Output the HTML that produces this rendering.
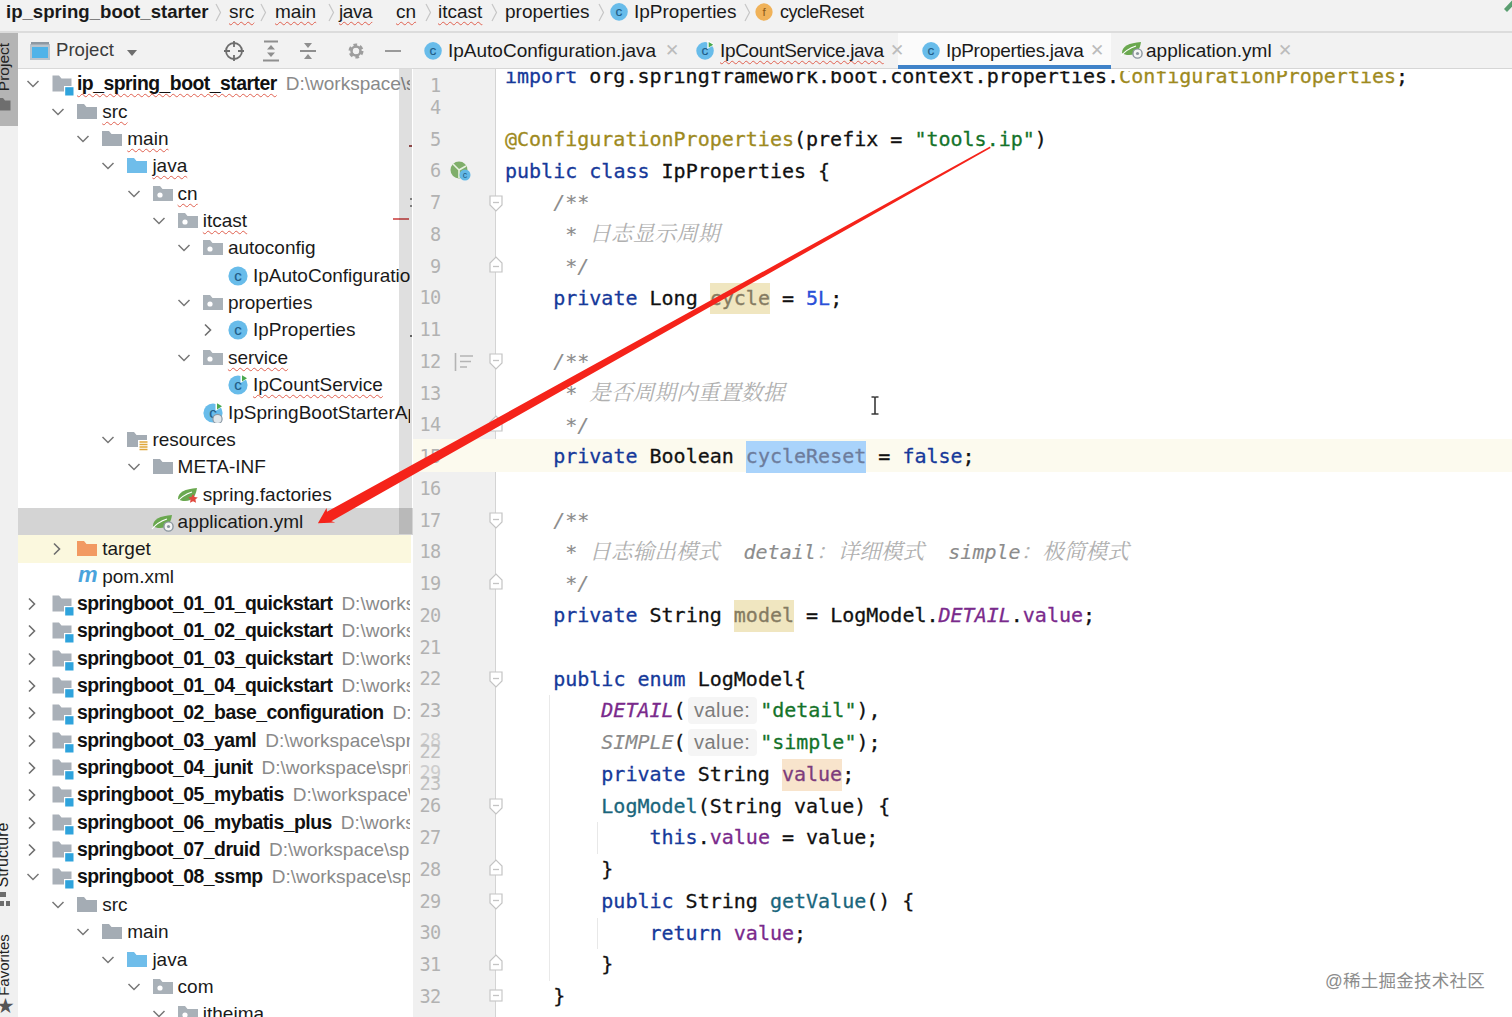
<!DOCTYPE html><html lang="zh"><head><meta charset="utf-8"><title>IpProperties.java</title><style>
*{box-sizing:border-box;margin:0;padding:0}
html,body{width:1512px;height:1017px;overflow:hidden;background:#fff}
body{position:relative;font-family:"Liberation Sans","Noto Sans CJK SC",sans-serif;color:#1a1a1a}
.abs{position:absolute}
#top{left:0;top:0;width:1512px;height:30px;background:#f2f2f2;font-size:19px;white-space:nowrap}
#top>span{position:absolute;top:0;line-height:24px}
#top .sep{color:#b9b9b9;font-size:20px}
#strip{left:0;top:30px;width:18px;height:987px;background:#f0f0f0;overflow:hidden}
#ptool{left:18px;top:30px;width:395px;height:39px;background:#f2f2f2;border-bottom:1px solid #d9d9d9}
#treebg{left:18px;top:69px;width:394.5px;height:948px;background:#fff}
#tree{left:18px;top:69px;width:392px;height:948px;overflow:hidden;font-size:19px;white-space:nowrap}
#tscroll{left:398.7px;top:69px;width:13px;height:465px;background:rgba(0,0,0,0.125)}
#tdiv{left:412.5px;top:69px;width:1px;height:948px;background:#e6e6e6}
.row{position:absolute;left:0;width:395px;height:27.35px;line-height:27.35px}
.row .t{position:absolute;top:0}
.row b{font-size:19.4px;letter-spacing:-0.52px;font-weight:bold;color:#111}
.row .p{color:#8a8a8a;margin-left:9px}
.sq{text-decoration:underline wavy #e0604f 1px;text-underline-offset:3px;text-decoration-skip-ink:none}
#tabs{left:413px;top:30px;width:1099px;height:39px;background:#f2f2f2;border-bottom:1px solid #d6d6d6;font-size:19px;white-space:nowrap}
#tabs>span{position:absolute;top:9px;line-height:24px}
#gutter{left:413px;top:69px;width:83px;height:948px;background:#f0f0f0;border-right:1px solid #d4d4d4}
#code{left:497px;top:69px;width:1015px;height:948px;background:#fff;overflow:hidden}
.ln{position:absolute;font-family:"DejaVu Sans Mono","Liberation Mono","Noto Serif CJK SC",monospace;font-size:18.6px;letter-spacing:-0.6px;color:#b2b2b2;line-height:31.75px;height:31.75px;text-align:right;width:30px;left:410.7px}
.cl{position:absolute;left:505px;font-family:"DejaVu Sans Mono","Liberation Mono","Noto Serif CJK SC",monospace;font-size:20px;line-height:31.75px;height:31.75px;white-space:pre;color:#111;-webkit-text-stroke:0.3px}
.k{color:#16399a} .s{color:#14732a} .n{color:#2a50d8} .f{color:#7a2a8c} .a{color:#9e8a1e}
.c{color:#8c8c8c;font-style:italic;-webkit-text-stroke:0.12px} .cc{color:#b0b0b0;-webkit-text-stroke:0;font-style:italic;font-size:21.7px;font-family:"Liberation Serif","Noto Serif CJK SC",serif}
.m{color:#1a667c} .i{font-style:italic}
.w,.w2,.sel{display:inline-block;height:31.75px;vertical-align:top} .w{background:#f0e6c0;color:#857b62} .w2{background:#f8e4cc;color:#7d3c7c} .sel{background:#a9d3fb;color:#6d7d9d}
.hint{display:inline-block;vertical-align:top;width:69px;height:27px;line-height:27px;margin:2px 3.5px 0 2px;text-align:center;font-family:"Liberation Sans","Noto Sans CJK SC",sans-serif;font-size:20px;letter-spacing:0.5px;color:#7c7c7c;background:#f5f5f5;border-radius:4px;-webkit-text-stroke:0}
</style></head><body>
<div id="top" class="abs">
<span style="left:6px"><b style="font-size:18.6px">ip_spring_boot_starter</b></span>
<span style="left:229px" class=sq>src</span>
<span style="left:275px" class=sq>main</span>
<span style="left:339px" class=sq><span style="letter-spacing:-0.4px">java</span></span>
<span style="left:396px" class=sq>cn</span>
<span style="left:438px" class=sq>itcast</span>
<span style="left:505px">properties</span>
<svg class="abs" style="left:215px;top:3px" width="7" height="19" viewBox="0 0 7 19"><path d="M1 1 L5.5 9.5 L1 18" fill="none" stroke="#c6c6c6" stroke-width="1.2"/></svg>
<svg class="abs" style="left:260px;top:3px" width="7" height="19" viewBox="0 0 7 19"><path d="M1 1 L5.5 9.5 L1 18" fill="none" stroke="#c6c6c6" stroke-width="1.2"/></svg>
<svg class="abs" style="left:328px;top:3px" width="7" height="19" viewBox="0 0 7 19"><path d="M1 1 L5.5 9.5 L1 18" fill="none" stroke="#c6c6c6" stroke-width="1.2"/></svg>
<svg class="abs" style="left:425px;top:3px" width="7" height="19" viewBox="0 0 7 19"><path d="M1 1 L5.5 9.5 L1 18" fill="none" stroke="#c6c6c6" stroke-width="1.2"/></svg>
<svg class="abs" style="left:491px;top:3px" width="7" height="19" viewBox="0 0 7 19"><path d="M1 1 L5.5 9.5 L1 18" fill="none" stroke="#c6c6c6" stroke-width="1.2"/></svg>
<svg class="abs" style="left:598px;top:3px" width="7" height="19" viewBox="0 0 7 19"><path d="M1 1 L5.5 9.5 L1 18" fill="none" stroke="#c6c6c6" stroke-width="1.2"/></svg>
<svg class="abs" style="left:744px;top:3px" width="7" height="19" viewBox="0 0 7 19"><path d="M1 1 L5.5 9.5 L1 18" fill="none" stroke="#c6c6c6" stroke-width="1.2"/></svg>
<span style="left:609px;top:0px"><svg width="21" height="21" viewBox="-1 -3 23 23"><circle cx="10" cy="10" r="9.6" fill="#68bcea"/><text x="10" y="15" font-family="Liberation Sans,sans-serif" font-size="15" text-anchor="middle" fill="#1f5c88" stroke="#1f5c88" stroke-width="0.15">c</text></svg></span><span style="left:634px">IpProperties</span>
<span style="left:755px;top:2.5px"><svg width="18" height="18" viewBox="0 0 20 20"><circle cx="10" cy="10" r="9.6" fill="#f0b259"/><text x="10" y="14.6" font-family="Liberation Sans,sans-serif" font-size="13" text-anchor="middle" fill="#8a5a1a">f</text></svg></span><span style="left:780px;font-size:18px;letter-spacing:-0.45px">cycleReset</span>
<svg class="abs" style="left:1500px;top:0" width="12" height="14" viewBox="0 0 12 14"><path d="M5.5 10.5 L14 1.5" stroke="#5a9e70" stroke-width="4.2" fill="none"/></svg>
</div>
<div id="strip" class="abs">
<div class="abs" style="left:0;top:1.5px;width:17.5px;height:94px;background:#b4b4b4"></div>
<div class="abs" style="left:3.8px;top:36.5px;width:0;height:0"><div style="position:absolute;transform:translate(-50%,-50%) rotate(-90deg);font-size:15.5px;white-space:nowrap;color:#222">Project</div></div>
<div class="abs" style="left:3px;top:824.5px;width:0;height:0"><div style="position:absolute;transform:translate(-50%,-50%) rotate(-90deg);font-size:16px;white-space:nowrap;color:#222">Structure</div></div>
<div class="abs" style="left:3px;top:934.5px;width:0;height:0"><div style="position:absolute;transform:translate(-50%,-50%) rotate(-90deg);font-size:15px;white-space:nowrap;color:#222">Favorites</div></div>
<svg class="abs" style="left:0;top:68px" width="14" height="14" viewBox="0 0 14 14"><path d="M0 0 H3 L5 2.5 H10.5 V12.5 H0 Z" fill="#6e6e6e"/></svg>
<svg class="abs" style="left:0;top:862px" width="12" height="16" viewBox="0 0 12 16"><rect x="0" y="0" width="6" height="5" fill="#6c6c6c"/><rect x="0" y="9" width="4" height="5" fill="#6c6c6c"/><rect x="6" y="9" width="4" height="5" fill="#6c6c6c"/></svg>
<div class="abs" style="left:-3px;top:962px;font-size:17px;color:#555">&#9733;</div>
</div>
<div id="ptool" class="abs">
<svg class="abs" style="left:12px;top:12px" width="20" height="18" viewBox="0 0 20 18"><rect x="0" y="2" width="20" height="16" fill="#b9c3cb"/><rect x="2" y="5" width="16" height="11" fill="#4fb3e8"/><rect x="1" y="0" width="18" height="2.5" fill="#8d98a2"/></svg>
<span class="abs" style="left:38px;top:7px;font-size:18.6px;line-height:26px;color:#3c3c3c">Project</span>
<svg class="abs" style="left:109px;top:19.5px" width="10" height="6" viewBox="0 0 10 6"><path d="M0 0 H10 L5 6 Z" fill="#6e6e6e"/></svg>
<svg class="abs" style="left:206px;top:11px" width="20" height="20" viewBox="0 0 20 20"><circle cx="10" cy="10" r="8" fill="none" stroke="#6e6e6e" stroke-width="1.8"/><path d="M10 0v6M10 14v6M0 10h6M14 10h6" stroke="#6e6e6e" stroke-width="1.8"/></svg>
<svg class="abs" style="left:244px;top:10px;opacity:.75" width="18" height="22" viewBox="0 0 18 22"><path d="M2 1.5h14M1 20.5h16" stroke="#6e6e6e" stroke-width="2"/><path d="M9 5 L13 9.5 H5 Z M9 17 L13 12.5 H5 Z" fill="#6e6e6e"/></svg>
<svg class="abs" style="left:281px;top:10px;opacity:.75" width="18" height="22" viewBox="0 0 18 22"><path d="M1 11h16" stroke="#6e6e6e" stroke-width="2"/><path d="M9 8 L13 3 H5 Z M9 14 L13 19 H5 Z" fill="#6e6e6e"/></svg>
<svg class="abs" style="left:328px;top:11px;opacity:.8" width="20" height="20" viewBox="0 0 20 20"><circle cx="10" cy="10" r="5.5" fill="none" stroke="#8a8a8a" stroke-width="4" stroke-dasharray="3.2 2.56"/><circle cx="10" cy="10" r="4.5" fill="none" stroke="#8a8a8a" stroke-width="2.5"/></svg>
<div class="abs" style="left:367px;top:19.5px;width:16px;height:2.2px;background:#9a9a9a"></div>
</div>
<div id="treebg" class="abs"></div>
<div class="abs" style="left:18px;top:507.90px;width:394.5px;height:27.35px;background:#d4d4d4"></div>
<div class="abs" style="left:18px;top:535.25px;width:393px;height:27.35px;background:#fbf8de"></div>
<div id="tree" class="abs">
<div class="row" style="top:1.30px;">
<span class="abs" style="left:8.0px;top:9px;line-height:0"><svg width="14" height="10" viewBox="0 0 14 10"><path d="M1.5 2 L7 7.5 L12.5 2" fill="none" stroke="#777" stroke-width="1.5"/></svg></span>
<span class="abs" style="left:34.0px;top:5px;line-height:0"><svg width="23" height="21" viewBox="0 0 23 21"><path d="M0.5 0.5 H7 L9.5 3.5 H19.5 V16.5 H0.5 Z" fill="#a9b0b8"/><rect x="12" y="11" width="10" height="10" fill="#fff"/><rect x="13.2" y="12.2" width="8.3" height="8.3" fill="#2fa3dc"/></svg></span>
<span class="t" style="left:59.0px"><b class="sq">ip_spring_boot_starter</b><span class="p">D:\workspace\sp</span></span></div>
<div class="row" style="top:28.65px;">
<span class="abs" style="left:33.1px;top:9px;line-height:0"><svg width="14" height="10" viewBox="0 0 14 10"><path d="M1.5 2 L7 7.5 L12.5 2" fill="none" stroke="#777" stroke-width="1.5"/></svg></span>
<span class="abs" style="left:59.1px;top:5px;line-height:0"><svg width="20" height="16" viewBox="0 0 20 16"><path d="M0 1 H7 L9.5 4 H20 V16 H0 Z" fill="#a4acb4"/></svg></span>
<span class="t" style="left:84.2px"><span class="sq">src</span></span></div>
<div class="row" style="top:56.00px;">
<span class="abs" style="left:58.3px;top:9px;line-height:0"><svg width="14" height="10" viewBox="0 0 14 10"><path d="M1.5 2 L7 7.5 L12.5 2" fill="none" stroke="#777" stroke-width="1.5"/></svg></span>
<span class="abs" style="left:84.3px;top:5px;line-height:0"><svg width="20" height="16" viewBox="0 0 20 16"><path d="M0 1 H7 L9.5 4 H20 V16 H0 Z" fill="#a4acb4"/></svg></span>
<span class="t" style="left:109.3px"><span class="sq">main</span></span></div>
<div class="row" style="top:83.35px;">
<span class="abs" style="left:83.4px;top:9px;line-height:0"><svg width="14" height="10" viewBox="0 0 14 10"><path d="M1.5 2 L7 7.5 L12.5 2" fill="none" stroke="#777" stroke-width="1.5"/></svg></span>
<span class="abs" style="left:109.4px;top:5px;line-height:0"><svg width="20" height="16" viewBox="0 0 20 16"><path d="M0 1 H7 L9.5 4 H20 V16 H0 Z" fill="#6fbdea"/></svg></span>
<span class="t" style="left:134.4px"><span class="sq">java</span></span></div>
<div class="row" style="top:110.70px;">
<span class="abs" style="left:108.6px;top:9px;line-height:0"><svg width="14" height="10" viewBox="0 0 14 10"><path d="M1.5 2 L7 7.5 L12.5 2" fill="none" stroke="#777" stroke-width="1.5"/></svg></span>
<span class="abs" style="left:134.6px;top:5px;line-height:0"><svg width="20" height="16" viewBox="0 0 20 16"><path d="M0 1 H7 L9.5 4 H20 V16 H0 Z" fill="#a9b1b8"/><circle cx="7" cy="10" r="2.6" fill="#fff"/></svg></span>
<span class="t" style="left:159.6px"><span class="sq">cn</span></span></div>
<div class="row" style="top:138.05px;">
<span class="abs" style="left:133.8px;top:9px;line-height:0"><svg width="14" height="10" viewBox="0 0 14 10"><path d="M1.5 2 L7 7.5 L12.5 2" fill="none" stroke="#777" stroke-width="1.5"/></svg></span>
<span class="abs" style="left:159.8px;top:5px;line-height:0"><svg width="20" height="16" viewBox="0 0 20 16"><path d="M0 1 H7 L9.5 4 H20 V16 H0 Z" fill="#a9b1b8"/><circle cx="7" cy="10" r="2.6" fill="#fff"/></svg></span>
<span class="t" style="left:184.8px"><span class="sq">itcast</span></span></div>
<div class="row" style="top:165.40px;">
<span class="abs" style="left:158.9px;top:9px;line-height:0"><svg width="14" height="10" viewBox="0 0 14 10"><path d="M1.5 2 L7 7.5 L12.5 2" fill="none" stroke="#777" stroke-width="1.5"/></svg></span>
<span class="abs" style="left:184.9px;top:5px;line-height:0"><svg width="20" height="16" viewBox="0 0 20 16"><path d="M0 1 H7 L9.5 4 H20 V16 H0 Z" fill="#a9b1b8"/><circle cx="7" cy="10" r="2.6" fill="#fff"/></svg></span>
<span class="t" style="left:209.9px">autoconfig</span></div>
<div class="row" style="top:192.75px;">
<span class="abs" style="left:209.0px;top:1px;line-height:0"><svg width="23" height="23" viewBox="-1 -3 23 23"><circle cx="10" cy="10" r="9.6" fill="#68bcea"/><text x="10" y="15" font-family="Liberation Sans,sans-serif" font-size="15" text-anchor="middle" fill="#1f5c88" stroke="#1f5c88" stroke-width="0.15">c</text></svg></span>
<span class="t" style="left:235.0px">IpAutoConfiguration</span></div>
<div class="row" style="top:220.10px;">
<span class="abs" style="left:158.9px;top:9px;line-height:0"><svg width="14" height="10" viewBox="0 0 14 10"><path d="M1.5 2 L7 7.5 L12.5 2" fill="none" stroke="#777" stroke-width="1.5"/></svg></span>
<span class="abs" style="left:184.9px;top:5px;line-height:0"><svg width="20" height="16" viewBox="0 0 20 16"><path d="M0 1 H7 L9.5 4 H20 V16 H0 Z" fill="#a9b1b8"/><circle cx="7" cy="10" r="2.6" fill="#fff"/></svg></span>
<span class="t" style="left:209.9px">properties</span></div>
<div class="row" style="top:247.45px;">
<span class="abs" style="left:184.5px;top:7px;line-height:0"><svg width="10" height="14" viewBox="0 0 10 14"><path d="M2 1.5 L7.5 7 L2 12.5" fill="none" stroke="#6e6e6e" stroke-width="1.6"/></svg></span>
<span class="abs" style="left:209.0px;top:1px;line-height:0"><svg width="23" height="23" viewBox="-1 -3 23 23"><circle cx="10" cy="10" r="9.6" fill="#68bcea"/><text x="10" y="15" font-family="Liberation Sans,sans-serif" font-size="15" text-anchor="middle" fill="#1f5c88" stroke="#1f5c88" stroke-width="0.15">c</text></svg></span>
<span class="t" style="left:235.0px">IpProperties</span></div>
<div class="row" style="top:274.80px;">
<span class="abs" style="left:158.9px;top:9px;line-height:0"><svg width="14" height="10" viewBox="0 0 14 10"><path d="M1.5 2 L7 7.5 L12.5 2" fill="none" stroke="#777" stroke-width="1.5"/></svg></span>
<span class="abs" style="left:184.9px;top:5px;line-height:0"><svg width="20" height="16" viewBox="0 0 20 16"><path d="M0 1 H7 L9.5 4 H20 V16 H0 Z" fill="#a9b1b8"/><circle cx="7" cy="10" r="2.6" fill="#fff"/></svg></span>
<span class="t" style="left:209.9px"><span class="sq">service</span></span></div>
<div class="row" style="top:302.15px;">
<span class="abs" style="left:209.0px;top:1px;line-height:0"><svg width="23" height="23" viewBox="-1 -3 23 23"><circle cx="10" cy="10" r="9.6" fill="#68bcea"/><text x="10" y="15" font-family="Liberation Sans,sans-serif" font-size="15" text-anchor="middle" fill="#1f5c88" stroke="#1f5c88" stroke-width="0.15">c</text><path d="M12.5 -2 L20.5 3 L12.5 8 Z" fill="#fff"/><path d="M14 0.2 L19 3.2 L14 6.4 Z" fill="#4aa84f"/></svg></span>
<span class="t" style="left:235.0px"><span class="sq">IpCountService</span></span></div>
<div class="row" style="top:329.50px;">
<span class="abs" style="left:183.9px;top:1px;line-height:0"><svg width="23" height="23" viewBox="-1 -3 23 23"><circle cx="10" cy="10" r="9.6" fill="#68bcea"/><text x="10" y="15" font-family="Liberation Sans,sans-serif" font-size="15" text-anchor="middle" fill="#1f5c88" stroke="#1f5c88" stroke-width="0.15">c</text><path d="M12.5 -2 L20.5 3 L12.5 8 Z" fill="#fff"/><path d="M14 0.2 L19 3.2 L14 6.4 Z" fill="#4aa84f"/><circle cx="14.5" cy="16" r="4.6" fill="#dfe6ea" stroke="#8a98a4" stroke-width="1.2"/></svg></span>
<span class="t" style="left:209.9px">IpSpringBootStarterApplication</span></div>
<div class="row" style="top:356.85px;">
<span class="abs" style="left:83.4px;top:9px;line-height:0"><svg width="14" height="10" viewBox="0 0 14 10"><path d="M1.5 2 L7 7.5 L12.5 2" fill="none" stroke="#777" stroke-width="1.5"/></svg></span>
<span class="abs" style="left:109.4px;top:5px;line-height:0"><svg width="22" height="20" viewBox="0 0 22 20"><path d="M0 1 H7 L9.5 4 H20 V16 H0 Z" fill="#a4acb4"/><rect x="11" y="9" width="10" height="11" fill="#fff"/><path d="M12.5 11h8M12.5 13.5h8M12.5 16h8M12.5 18.5h8" stroke="#e0a73a" stroke-width="1.5"/></svg></span>
<span class="t" style="left:134.4px">resources</span></div>
<div class="row" style="top:384.20px;">
<span class="abs" style="left:108.6px;top:9px;line-height:0"><svg width="14" height="10" viewBox="0 0 14 10"><path d="M1.5 2 L7 7.5 L12.5 2" fill="none" stroke="#777" stroke-width="1.5"/></svg></span>
<span class="abs" style="left:134.6px;top:5px;line-height:0"><svg width="20" height="16" viewBox="0 0 20 16"><path d="M0 1 H7 L9.5 4 H20 V16 H0 Z" fill="#a4acb4"/></svg></span>
<span class="t" style="left:159.6px">META-INF</span></div>
<div class="row" style="top:411.55px;">
<span class="abs" style="left:157.8px;top:4px;line-height:0"><svg width="24" height="20" viewBox="0 0 24 20"><path d="M2 14 C2 7 9 4 21 3 C20 10 17 16 9 16 C6 16 4 15.5 2 14 Z" fill="#6aa84f"/><path d="M1 17 C5 12 10 9 16 7" stroke="#fff" stroke-width="1.2" fill="none"/><path d="M17 9 l1.6 3 3.2 .4 -2.4 2.2 .7 3.2 -3.1-1.6 -3 1.6 .6-3.2 -2.3-2.2 3.2-.4z" fill="#e0493e"/></svg></span>
<span class="t" style="left:184.8px">spring.factories</span></div>
<div class="row" style="top:438.90px;">
<span class="abs" style="left:132.6px;top:4px;line-height:0"><svg width="24" height="20" viewBox="0 0 24 20"><path d="M2 14 C2 7 9 4 21 3 C20 10 17 16 9 16 C6 16 4 15.5 2 14 Z" fill="#6aa84f"/><path d="M1 17 C5 12 10 9 16 7" stroke="#fff" stroke-width="1.2" fill="none"/><circle cx="17.5" cy="14.5" r="4.6" fill="#f4f4f4" stroke="#8a959e" stroke-width="1.4"/><circle cx="17.5" cy="14.5" r="1.6" fill="#8a959e"/></svg></span>
<span class="t" style="left:159.6px">application.yml</span></div>
<div class="row" style="top:466.25px;">
<span class="abs" style="left:33.6px;top:7px;line-height:0"><svg width="10" height="14" viewBox="0 0 10 14"><path d="M2 1.5 L7.5 7 L2 12.5" fill="none" stroke="#6e6e6e" stroke-width="1.6"/></svg></span>
<span class="abs" style="left:59.1px;top:5px;line-height:0"><svg width="20" height="16" viewBox="0 0 20 16"><path d="M0 1 H7 L9.5 4 H20 V16 H0 Z" fill="#f29a62"/></svg></span>
<span class="t" style="left:84.2px">target</span></div>
<div class="row" style="top:493.60px;">
<span class="abs" style="left:60.1px;top:3px;line-height:0"><span style="font:italic bold 22px 'Liberation Sans',sans-serif;color:#4aa3dc;line-height:18px;letter-spacing:-1px">m</span></span>
<span class="t" style="left:84.2px">pom.xml</span></div>
<div class="row" style="top:520.95px;">
<span class="abs" style="left:8.5px;top:7px;line-height:0"><svg width="10" height="14" viewBox="0 0 10 14"><path d="M2 1.5 L7.5 7 L2 12.5" fill="none" stroke="#6e6e6e" stroke-width="1.6"/></svg></span>
<span class="abs" style="left:34.0px;top:5px;line-height:0"><svg width="23" height="21" viewBox="0 0 23 21"><path d="M0.5 0.5 H7 L9.5 3.5 H19.5 V16.5 H0.5 Z" fill="#a9b0b8"/><rect x="12" y="11" width="10" height="10" fill="#fff"/><rect x="13.2" y="12.2" width="8.3" height="8.3" fill="#2fa3dc"/></svg></span>
<span class="t" style="left:59.0px"><b>springboot_01_01_quickstart</b><span class="p">D:\workspace</span></span></div>
<div class="row" style="top:548.30px;">
<span class="abs" style="left:8.5px;top:7px;line-height:0"><svg width="10" height="14" viewBox="0 0 10 14"><path d="M2 1.5 L7.5 7 L2 12.5" fill="none" stroke="#6e6e6e" stroke-width="1.6"/></svg></span>
<span class="abs" style="left:34.0px;top:5px;line-height:0"><svg width="23" height="21" viewBox="0 0 23 21"><path d="M0.5 0.5 H7 L9.5 3.5 H19.5 V16.5 H0.5 Z" fill="#a9b0b8"/><rect x="12" y="11" width="10" height="10" fill="#fff"/><rect x="13.2" y="12.2" width="8.3" height="8.3" fill="#2fa3dc"/></svg></span>
<span class="t" style="left:59.0px"><b>springboot_01_02_quickstart</b><span class="p">D:\workspace</span></span></div>
<div class="row" style="top:575.65px;">
<span class="abs" style="left:8.5px;top:7px;line-height:0"><svg width="10" height="14" viewBox="0 0 10 14"><path d="M2 1.5 L7.5 7 L2 12.5" fill="none" stroke="#6e6e6e" stroke-width="1.6"/></svg></span>
<span class="abs" style="left:34.0px;top:5px;line-height:0"><svg width="23" height="21" viewBox="0 0 23 21"><path d="M0.5 0.5 H7 L9.5 3.5 H19.5 V16.5 H0.5 Z" fill="#a9b0b8"/><rect x="12" y="11" width="10" height="10" fill="#fff"/><rect x="13.2" y="12.2" width="8.3" height="8.3" fill="#2fa3dc"/></svg></span>
<span class="t" style="left:59.0px"><b>springboot_01_03_quickstart</b><span class="p">D:\workspace</span></span></div>
<div class="row" style="top:603.00px;">
<span class="abs" style="left:8.5px;top:7px;line-height:0"><svg width="10" height="14" viewBox="0 0 10 14"><path d="M2 1.5 L7.5 7 L2 12.5" fill="none" stroke="#6e6e6e" stroke-width="1.6"/></svg></span>
<span class="abs" style="left:34.0px;top:5px;line-height:0"><svg width="23" height="21" viewBox="0 0 23 21"><path d="M0.5 0.5 H7 L9.5 3.5 H19.5 V16.5 H0.5 Z" fill="#a9b0b8"/><rect x="12" y="11" width="10" height="10" fill="#fff"/><rect x="13.2" y="12.2" width="8.3" height="8.3" fill="#2fa3dc"/></svg></span>
<span class="t" style="left:59.0px"><b>springboot_01_04_quickstart</b><span class="p">D:\workspace</span></span></div>
<div class="row" style="top:630.35px;">
<span class="abs" style="left:8.5px;top:7px;line-height:0"><svg width="10" height="14" viewBox="0 0 10 14"><path d="M2 1.5 L7.5 7 L2 12.5" fill="none" stroke="#6e6e6e" stroke-width="1.6"/></svg></span>
<span class="abs" style="left:34.0px;top:5px;line-height:0"><svg width="23" height="21" viewBox="0 0 23 21"><path d="M0.5 0.5 H7 L9.5 3.5 H19.5 V16.5 H0.5 Z" fill="#a9b0b8"/><rect x="12" y="11" width="10" height="10" fill="#fff"/><rect x="13.2" y="12.2" width="8.3" height="8.3" fill="#2fa3dc"/></svg></span>
<span class="t" style="left:59.0px"><b>springboot_02_base_configuration</b><span class="p">D:\workspace</span></span></div>
<div class="row" style="top:657.70px;">
<span class="abs" style="left:8.5px;top:7px;line-height:0"><svg width="10" height="14" viewBox="0 0 10 14"><path d="M2 1.5 L7.5 7 L2 12.5" fill="none" stroke="#6e6e6e" stroke-width="1.6"/></svg></span>
<span class="abs" style="left:34.0px;top:5px;line-height:0"><svg width="23" height="21" viewBox="0 0 23 21"><path d="M0.5 0.5 H7 L9.5 3.5 H19.5 V16.5 H0.5 Z" fill="#a9b0b8"/><rect x="12" y="11" width="10" height="10" fill="#fff"/><rect x="13.2" y="12.2" width="8.3" height="8.3" fill="#2fa3dc"/></svg></span>
<span class="t" style="left:59.0px"><b>springboot_03_yaml</b><span class="p">D:\workspace\springboot</span></span></div>
<div class="row" style="top:685.05px;">
<span class="abs" style="left:8.5px;top:7px;line-height:0"><svg width="10" height="14" viewBox="0 0 10 14"><path d="M2 1.5 L7.5 7 L2 12.5" fill="none" stroke="#6e6e6e" stroke-width="1.6"/></svg></span>
<span class="abs" style="left:34.0px;top:5px;line-height:0"><svg width="23" height="21" viewBox="0 0 23 21"><path d="M0.5 0.5 H7 L9.5 3.5 H19.5 V16.5 H0.5 Z" fill="#a9b0b8"/><rect x="12" y="11" width="10" height="10" fill="#fff"/><rect x="13.2" y="12.2" width="8.3" height="8.3" fill="#2fa3dc"/></svg></span>
<span class="t" style="left:59.0px"><b>springboot_04_junit</b><span class="p">D:\workspace\springboot</span></span></div>
<div class="row" style="top:712.40px;">
<span class="abs" style="left:8.5px;top:7px;line-height:0"><svg width="10" height="14" viewBox="0 0 10 14"><path d="M2 1.5 L7.5 7 L2 12.5" fill="none" stroke="#6e6e6e" stroke-width="1.6"/></svg></span>
<span class="abs" style="left:34.0px;top:5px;line-height:0"><svg width="23" height="21" viewBox="0 0 23 21"><path d="M0.5 0.5 H7 L9.5 3.5 H19.5 V16.5 H0.5 Z" fill="#a9b0b8"/><rect x="12" y="11" width="10" height="10" fill="#fff"/><rect x="13.2" y="12.2" width="8.3" height="8.3" fill="#2fa3dc"/></svg></span>
<span class="t" style="left:59.0px"><b>springboot_05_mybatis</b><span class="p">D:\workspace\springboot</span></span></div>
<div class="row" style="top:739.75px;">
<span class="abs" style="left:8.5px;top:7px;line-height:0"><svg width="10" height="14" viewBox="0 0 10 14"><path d="M2 1.5 L7.5 7 L2 12.5" fill="none" stroke="#6e6e6e" stroke-width="1.6"/></svg></span>
<span class="abs" style="left:34.0px;top:5px;line-height:0"><svg width="23" height="21" viewBox="0 0 23 21"><path d="M0.5 0.5 H7 L9.5 3.5 H19.5 V16.5 H0.5 Z" fill="#a9b0b8"/><rect x="12" y="11" width="10" height="10" fill="#fff"/><rect x="13.2" y="12.2" width="8.3" height="8.3" fill="#2fa3dc"/></svg></span>
<span class="t" style="left:59.0px"><b>springboot_06_mybatis_plus</b><span class="p">D:\workspace\springboot</span></span></div>
<div class="row" style="top:767.10px;">
<span class="abs" style="left:8.5px;top:7px;line-height:0"><svg width="10" height="14" viewBox="0 0 10 14"><path d="M2 1.5 L7.5 7 L2 12.5" fill="none" stroke="#6e6e6e" stroke-width="1.6"/></svg></span>
<span class="abs" style="left:34.0px;top:5px;line-height:0"><svg width="23" height="21" viewBox="0 0 23 21"><path d="M0.5 0.5 H7 L9.5 3.5 H19.5 V16.5 H0.5 Z" fill="#a9b0b8"/><rect x="12" y="11" width="10" height="10" fill="#fff"/><rect x="13.2" y="12.2" width="8.3" height="8.3" fill="#2fa3dc"/></svg></span>
<span class="t" style="left:59.0px"><b>springboot_07_druid</b><span class="p">D:\workspace\springboot</span></span></div>
<div class="row" style="top:794.45px;">
<span class="abs" style="left:8.0px;top:9px;line-height:0"><svg width="14" height="10" viewBox="0 0 14 10"><path d="M1.5 2 L7 7.5 L12.5 2" fill="none" stroke="#777" stroke-width="1.5"/></svg></span>
<span class="abs" style="left:34.0px;top:5px;line-height:0"><svg width="23" height="21" viewBox="0 0 23 21"><path d="M0.5 0.5 H7 L9.5 3.5 H19.5 V16.5 H0.5 Z" fill="#a9b0b8"/><rect x="12" y="11" width="10" height="10" fill="#fff"/><rect x="13.2" y="12.2" width="8.3" height="8.3" fill="#2fa3dc"/></svg></span>
<span class="t" style="left:59.0px"><b>springboot_08_ssmp</b><span class="p">D:\workspace\springboot</span></span></div>
<div class="row" style="top:821.80px;">
<span class="abs" style="left:33.1px;top:9px;line-height:0"><svg width="14" height="10" viewBox="0 0 14 10"><path d="M1.5 2 L7 7.5 L12.5 2" fill="none" stroke="#777" stroke-width="1.5"/></svg></span>
<span class="abs" style="left:59.1px;top:5px;line-height:0"><svg width="20" height="16" viewBox="0 0 20 16"><path d="M0 1 H7 L9.5 4 H20 V16 H0 Z" fill="#a4acb4"/></svg></span>
<span class="t" style="left:84.2px">src</span></div>
<div class="row" style="top:849.15px;">
<span class="abs" style="left:58.3px;top:9px;line-height:0"><svg width="14" height="10" viewBox="0 0 14 10"><path d="M1.5 2 L7 7.5 L12.5 2" fill="none" stroke="#777" stroke-width="1.5"/></svg></span>
<span class="abs" style="left:84.3px;top:5px;line-height:0"><svg width="20" height="16" viewBox="0 0 20 16"><path d="M0 1 H7 L9.5 4 H20 V16 H0 Z" fill="#a4acb4"/></svg></span>
<span class="t" style="left:109.3px">main</span></div>
<div class="row" style="top:876.50px;">
<span class="abs" style="left:83.4px;top:9px;line-height:0"><svg width="14" height="10" viewBox="0 0 14 10"><path d="M1.5 2 L7 7.5 L12.5 2" fill="none" stroke="#777" stroke-width="1.5"/></svg></span>
<span class="abs" style="left:109.4px;top:5px;line-height:0"><svg width="20" height="16" viewBox="0 0 20 16"><path d="M0 1 H7 L9.5 4 H20 V16 H0 Z" fill="#6fbdea"/></svg></span>
<span class="t" style="left:134.4px">java</span></div>
<div class="row" style="top:903.85px;">
<span class="abs" style="left:108.6px;top:9px;line-height:0"><svg width="14" height="10" viewBox="0 0 14 10"><path d="M1.5 2 L7 7.5 L12.5 2" fill="none" stroke="#777" stroke-width="1.5"/></svg></span>
<span class="abs" style="left:134.6px;top:5px;line-height:0"><svg width="20" height="16" viewBox="0 0 20 16"><path d="M0 1 H7 L9.5 4 H20 V16 H0 Z" fill="#a9b1b8"/><circle cx="7" cy="10" r="2.6" fill="#fff"/></svg></span>
<span class="t" style="left:159.6px">com</span></div>
<div class="row" style="top:931.20px;">
<span class="abs" style="left:133.8px;top:9px;line-height:0"><svg width="14" height="10" viewBox="0 0 14 10"><path d="M1.5 2 L7 7.5 L12.5 2" fill="none" stroke="#777" stroke-width="1.5"/></svg></span>
<span class="abs" style="left:159.8px;top:5px;line-height:0"><svg width="20" height="16" viewBox="0 0 20 16"><path d="M0 1 H7 L9.5 4 H20 V16 H0 Z" fill="#a9b1b8"/><circle cx="7" cy="10" r="2.6" fill="#fff"/></svg></span>
<span class="t" style="left:184.8px">itheima</span></div>
</div>
<div class="abs" style="left:392.5px;top:218.3px;width:16px;height:1.6px;background:#d66a6a"></div><div class="abs" style="left:409px;top:145px;width:3px;height:1.5px;background:#a05050"></div><div class="abs" style="left:409.5px;top:198px;width:2px;height:2px;background:#909090"></div><div class="abs" style="left:409.5px;top:205px;width:2px;height:2px;background:#909090"></div><div class="abs" style="left:409.5px;top:335px;width:2px;height:2px;background:#707070"></div>
<div id="tscroll" class="abs"></div><div id="tdiv" class="abs"></div>
<div id="gutter" class="abs"></div>
<div id="code" class="abs"></div>
<div class="abs" style="left:413px;top:438.9px;width:1099px;height:32.8px;background:#fcfaee"></div>
<div class="ln" style="top:70.1px">1</div>
<div class="ln" style="top:91.9px">4</div>
<div class="ln" style="top:123.6px">5</div>
<div class="ln" style="top:155.3px">6</div>
<div class="ln" style="top:187.1px">7</div>
<div class="ln" style="top:218.8px">8</div>
<div class="ln" style="top:250.6px">9</div>
<div class="ln" style="top:282.3px">10</div>
<div class="ln" style="top:314.1px">11</div>
<div class="ln" style="top:345.8px">12</div>
<div class="ln" style="top:377.6px">13</div>
<div class="ln" style="top:409.3px">14</div>
<div class="ln" style="top:441.1px">15</div>
<div class="ln" style="top:472.8px">16</div>
<div class="ln" style="top:504.6px">17</div>
<div class="ln" style="top:536.4px">18</div>
<div class="ln" style="top:568.1px">19</div>
<div class="ln" style="top:599.9px">20</div>
<div class="ln" style="top:631.6px">21</div>
<div class="ln" style="top:663.4px">22</div>
<div class="ln" style="top:695.1px">23</div>
<div class="ln" style="top:725.4px;color:#cdcdcd">28</div>
<div class="ln" style="top:736.4px;color:#c0c0c0">22</div>
<div class="ln" style="top:757.1px;color:#cdcdcd">29</div>
<div class="ln" style="top:768.1px;color:#c0c0c0">23</div>
<div class="ln" style="top:790.4px">26</div>
<div class="ln" style="top:822.1px">27</div>
<div class="ln" style="top:853.9px">28</div>
<div class="ln" style="top:885.6px">29</div>
<div class="ln" style="top:917.4px">30</div>
<div class="ln" style="top:949.1px">31</div>
<div class="ln" style="top:980.9px">32</div>
<div class="cl" style="top:61.4px"><span class="k">import</span> org.springframework.boot.context.properties.<span class="a">ConfigurationProperties</span>;</div>
<div class="cl" style="top:92.2px"></div>
<div class="cl" style="top:123.9px"><span class="a">@ConfigurationProperties</span>(prefix = <span class="s">"tools.ip"</span>)</div>
<div class="cl" style="top:155.7px"><span class="k">public</span> <span class="k">class</span> IpProperties {</div>
<div class="cl" style="top:187.4px">    <span class="c">/**</span></div>
<div class="cl" style="top:219.2px">    <span class="c"> * </span><span class="cc">日志显示周期</span></div>
<div class="cl" style="top:250.9px">    <span class="c"> */</span></div>
<div class="cl" style="top:282.6px">    <span class="k">private</span> Long <span class="f w">cycle</span> = <span class="n">5L</span>;</div>
<div class="cl" style="top:314.4px"></div>
<div class="cl" style="top:346.1px">    <span class="c">/**</span></div>
<div class="cl" style="top:377.9px">    <span class="c"> * </span><span class="cc">是否周期内重置数据</span></div>
<div class="cl" style="top:409.6px">    <span class="c"> */</span></div>
<div class="cl" style="top:441.4px">    <span class="k">private</span> Boolean <span class="sel">cycleReset</span> = <span class="k">false</span>;</div>
<div class="cl" style="top:473.1px"></div>
<div class="cl" style="top:504.9px">    <span class="c">/**</span></div>
<div class="cl" style="top:536.6px">    <span class="c"> * </span><span class="cc">日志输出模式</span><span class="c">  detail</span><span class="cc">：详细模式</span><span class="c">  simple</span><span class="cc">：极简模式</span></div>
<div class="cl" style="top:568.4px">    <span class="c"> */</span></div>
<div class="cl" style="top:600.1px">    <span class="k">private</span> String <span class="f w">model</span> = LogModel.<span class="f i">DETAIL</span>.<span class="f">value</span>;</div>
<div class="cl" style="top:631.9px"></div>
<div class="cl" style="top:663.6px">    <span class="k">public</span> <span class="k">enum</span> LogModel{</div>
<div class="cl" style="top:695.4px">        <span class="f i">DETAIL</span>(<span class="hint">value:</span><span class="s">"detail"</span>),</div>
<div class="cl" style="top:727.1px">        <span class="c" style="color:#8a8a8a">SIMPLE</span>(<span class="hint">value:</span><span class="s">"simple"</span>);</div>
<div class="cl" style="top:758.9px">        <span class="k">private</span> String <span class="f w2">value</span>;</div>
<div class="cl" style="top:790.6px">        <span class="m">LogModel</span>(String value) {</div>
<div class="cl" style="top:822.4px">            <span class="k">this</span>.<span class="f">value</span> = value;</div>
<div class="cl" style="top:854.1px">        }</div>
<div class="cl" style="top:885.9px">        <span class="k">public</span> String <span class="m">getValue</span>() {</div>
<div class="cl" style="top:917.6px">            <span class="k">return</span> <span class="f">value</span>;</div>
<div class="cl" style="top:949.4px">        }</div>
<div class="cl" style="top:981.1px">    }</div>
<div id="tabs" class="abs">
<div class="abs" style="left:485px;top:1px;width:213px;height:37px;background:#fbfbfb"></div>
<div class="abs" style="left:485px;top:34.5px;width:213px;height:4px;background:#4083c9"></div>
<span style="left:10px;top:9px;line-height:0"><svg width="21" height="21" viewBox="-1 -3 23 23"><circle cx="10" cy="10" r="9.6" fill="#68bcea"/><text x="10" y="15" font-family="Liberation Sans,sans-serif" font-size="15" text-anchor="middle" fill="#1f5c88" stroke="#1f5c88" stroke-width="0.15">c</text></svg></span><span style="left:35px">IpAutoConfiguration.java</span><span style="left:252px;color:#bcbcbc;font-size:17px">&#x2715;</span>
<span style="left:282px;top:9px;line-height:0"><svg width="21" height="21" viewBox="-1 -3 23 23"><circle cx="10" cy="10" r="9.6" fill="#68bcea"/><text x="10" y="15" font-family="Liberation Sans,sans-serif" font-size="15" text-anchor="middle" fill="#1f5c88" stroke="#1f5c88" stroke-width="0.15">c</text><path d="M12.5 -2 L20.5 3 L12.5 8 Z" fill="#fff"/><path d="M14 0.2 L19 3.2 L14 6.4 Z" fill="#4aa84f"/></svg></span><span style="left:307px" class=sq><span style="letter-spacing:-0.33px">IpCountService.java</span></span><span style="left:477px;color:#bcbcbc;font-size:17px">&#x2715;</span>
<span style="left:508px;top:9px;line-height:0"><svg width="21" height="21" viewBox="-1 -3 23 23"><circle cx="10" cy="10" r="9.6" fill="#68bcea"/><text x="10" y="15" font-family="Liberation Sans,sans-serif" font-size="15" text-anchor="middle" fill="#1f5c88" stroke="#1f5c88" stroke-width="0.15">c</text></svg></span><span style="left:533px"><span style="letter-spacing:-0.3px">IpProperties.java</span></span><span style="left:677px;color:#bcbcbc;font-size:17px">&#x2715;</span>
<span style="left:707px;top:9px;line-height:0"><svg width="24" height="20" viewBox="0 0 24 20"><path d="M2 14 C2 7 9 4 21 3 C20 10 17 16 9 16 C6 16 4 15.5 2 14 Z" fill="#6aa84f"/><path d="M1 17 C5 12 10 9 16 7" stroke="#fff" stroke-width="1.2" fill="none"/><circle cx="17.5" cy="14.5" r="4.6" fill="#f4f4f4" stroke="#8a959e" stroke-width="1.4"/><circle cx="17.5" cy="14.5" r="1.6" fill="#8a959e"/></svg></span><span style="left:733px">application.yml</span><span style="left:865px;color:#bcbcbc;font-size:17px">&#x2715;</span>
</div>
<div class="abs" style="left:496.5px;top:69px;width:1016px;height:1.7px;background:#fff"></div>
<svg class="abs" style="left:489px;top:194.5px" width="14" height="17" viewBox="0 0 14 17"><path d="M1 1 H13 V10 L7 16 L1 10 Z" fill="#fff" stroke="#c4c4c4" stroke-width="1.2"/><path d="M4 7.5 H10" stroke="#c4c4c4" stroke-width="1.3"/></svg>
<svg class="abs" style="left:489px;top:353.2px" width="14" height="17" viewBox="0 0 14 17"><path d="M1 1 H13 V10 L7 16 L1 10 Z" fill="#fff" stroke="#c4c4c4" stroke-width="1.2"/><path d="M4 7.5 H10" stroke="#c4c4c4" stroke-width="1.3"/></svg>
<svg class="abs" style="left:489px;top:512.0px" width="14" height="17" viewBox="0 0 14 17"><path d="M1 1 H13 V10 L7 16 L1 10 Z" fill="#fff" stroke="#c4c4c4" stroke-width="1.2"/><path d="M4 7.5 H10" stroke="#c4c4c4" stroke-width="1.3"/></svg>
<svg class="abs" style="left:489px;top:670.7px" width="14" height="17" viewBox="0 0 14 17"><path d="M1 1 H13 V10 L7 16 L1 10 Z" fill="#fff" stroke="#c4c4c4" stroke-width="1.2"/><path d="M4 7.5 H10" stroke="#c4c4c4" stroke-width="1.3"/></svg>
<svg class="abs" style="left:489px;top:797.7px" width="14" height="17" viewBox="0 0 14 17"><path d="M1 1 H13 V10 L7 16 L1 10 Z" fill="#fff" stroke="#c4c4c4" stroke-width="1.2"/><path d="M4 7.5 H10" stroke="#c4c4c4" stroke-width="1.3"/></svg>
<svg class="abs" style="left:489px;top:893.0px" width="14" height="17" viewBox="0 0 14 17"><path d="M1 1 H13 V10 L7 16 L1 10 Z" fill="#fff" stroke="#c4c4c4" stroke-width="1.2"/><path d="M4 7.5 H10" stroke="#c4c4c4" stroke-width="1.3"/></svg>
<svg class="abs" style="left:489px;top:255.8px" width="14" height="17" viewBox="0 0 14 17"><path d="M1 16 H13 V7 L7 1 L1 7 Z" fill="#fff" stroke="#c4c4c4" stroke-width="1.2"/><path d="M4 10.5 H10" stroke="#c4c4c4" stroke-width="1.3"/></svg>
<svg class="abs" style="left:489px;top:414.5px" width="14" height="17" viewBox="0 0 14 17"><path d="M1 16 H13 V7 L7 1 L1 7 Z" fill="#fff" stroke="#c4c4c4" stroke-width="1.2"/><path d="M4 10.5 H10" stroke="#c4c4c4" stroke-width="1.3"/></svg>
<svg class="abs" style="left:489px;top:573.3px" width="14" height="17" viewBox="0 0 14 17"><path d="M1 16 H13 V7 L7 1 L1 7 Z" fill="#fff" stroke="#c4c4c4" stroke-width="1.2"/><path d="M4 10.5 H10" stroke="#c4c4c4" stroke-width="1.3"/></svg>
<svg class="abs" style="left:489px;top:859.0px" width="14" height="17" viewBox="0 0 14 17"><path d="M1 16 H13 V7 L7 1 L1 7 Z" fill="#fff" stroke="#c4c4c4" stroke-width="1.2"/><path d="M4 10.5 H10" stroke="#c4c4c4" stroke-width="1.3"/></svg>
<svg class="abs" style="left:489px;top:954.3px" width="14" height="17" viewBox="0 0 14 17"><path d="M1 16 H13 V7 L7 1 L1 7 Z" fill="#fff" stroke="#c4c4c4" stroke-width="1.2"/><path d="M4 10.5 H10" stroke="#c4c4c4" stroke-width="1.3"/></svg>
<svg class="abs" style="left:489px;top:989.0px" width="14" height="13" viewBox="0 0 14 13"><rect x="1" y="1" width="12" height="11" fill="#fff" stroke="#c9c9c9" stroke-width="1.2"/><path d="M4 6.5 H10" stroke="#c4c4c4" stroke-width="1.3"/></svg>
<svg class="abs" style="left:450px;top:160.7px" width="22" height="22" viewBox="0 0 22 22"><circle cx="9" cy="9" r="8.5" fill="#7fae6a"/><path d="M9 9 L3 3 M9 9 L16 5 M9 9 V17" stroke="#e8f2e2" stroke-width="1.6"/><circle cx="15" cy="14" r="5.5" fill="#63b8e6"/><text x="15" y="17.3" font-size="9" text-anchor="middle" fill="#1d5a82" font-family="Liberation Sans,sans-serif">c</text></svg>
<svg class="abs" style="left:454px;top:353.1px" width="20" height="18" viewBox="0 0 20 18"><path d="M1.5 0v18" stroke="#b4b4b4" stroke-width="1.6"/><path d="M6 3h13M6 8.5h11M6 14h7" stroke="#b4b4b4" stroke-width="1.6"/></svg>
<div class="abs" style="left:548.5px;top:695.4px;width:1px;height:285.8px;background:#e9e9e9"></div>
<div class="abs" style="left:597px;top:822.4px;width:1px;height:31.8px;background:#e8e8e8"></div>
<div class="abs" style="left:597px;top:917.6px;width:1px;height:31.8px;background:#e8e8e8"></div>
<svg class="abs" style="left:870px;top:396px" width="10" height="19" viewBox="0 0 10 19"><path d="M1.5 1 H4 Q5 1 5 2.5 Q5 1 6 1 H8.5 M5 2 V17 M1.5 18 H4 Q5 18 5 16.5 Q5 18 6 18 H8.5" stroke="#3a3a3a" stroke-width="1.6" fill="none"/></svg>
<div class="abs" style="left:0;top:31px;width:1512px;height:1.5px;background:#dcdcdc"></div>
<svg class="abs" style="left:0;top:0;pointer-events:none" width="1512" height="1017" viewBox="0 0 1512 1017"><path d="M990 146.6 L327 511.7 L326.6 507.9 L317.9 523.3 L335.3 522.4 L331.3 521.2 L990.6 148 Z" fill="#f5231a"/></svg>
<div class="abs" style="left:1325px;top:969.3px;font-size:17.5px;letter-spacing:0.25px;line-height:24px;color:#8c8c8c;white-space:nowrap;font-family:'Liberation Sans','Noto Sans CJK SC',sans-serif">@稀土掘金技术社区</div>
</body></html>
